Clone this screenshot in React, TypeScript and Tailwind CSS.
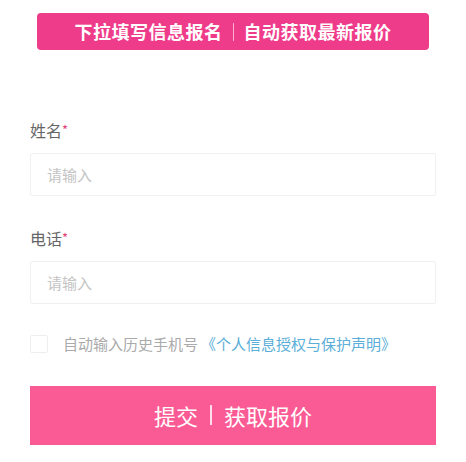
const font = { fontFamily: '"Noto Sans CJK SC", "Noto Sans", sans-serif' };

function Field({ label }: { label: string }) {
  return (
    <div className="flex flex-col">
      <div className="text-[16px] leading-[20px] text-[#666]">
        {label}
        <span className="text-[#e0457b] align-top text-[13px]">*</span>
      </div>
      <input
        placeholder="请输入"
        className="mt-[13px] h-[43px] w-full border border-[#f0f0f0] rounded-[2px] px-4 text-[15px] text-[#333] placeholder:text-[#c4c4c4] outline-none"
      />
    </div>
  );
}

export default function App() {
  return (
    <div className="w-[466px] h-[462px] bg-white overflow-hidden" style={font}>
      <div className="pt-[13px] px-[37px]">
        <div className="h-[37px] rounded-[4px] bg-[#ef3c8a] flex items-center justify-center text-white font-bold text-[18px] tracking-[0.5px]">
          下拉填写信息报名
          <span className="mx-[10px] w-px h-[18px] bg-white/60" />
          自动获取最新报价
        </div>
      </div>

      <div className="px-[30px] mt-[70px] flex flex-col">
        <Field label="姓名" />
        <div className="h-[32px]" />
        <Field label="电话" />

        <div className="flex items-center mt-[29px]">
          <span className="w-[18px] h-[18px] border border-[#eee] rounded-[2px] bg-white" />
          <span className="ml-[15px] text-[15px] text-[#aaa]">自动输入历史手机号</span>
          <span className="ml-[3px] text-[15px] text-[#5aaed8]">《个人信息授权与保护声明》</span>
        </div>

        <button className="mt-[30px] h-[59px] w-full bg-[#fb5b94] text-white text-[22px] flex items-center justify-center">
          提交
          <span className="mx-[12px] w-[2px] h-[20px] bg-white/80" />
          获取报价
        </button>
      </div>
    </div>
  );
}
